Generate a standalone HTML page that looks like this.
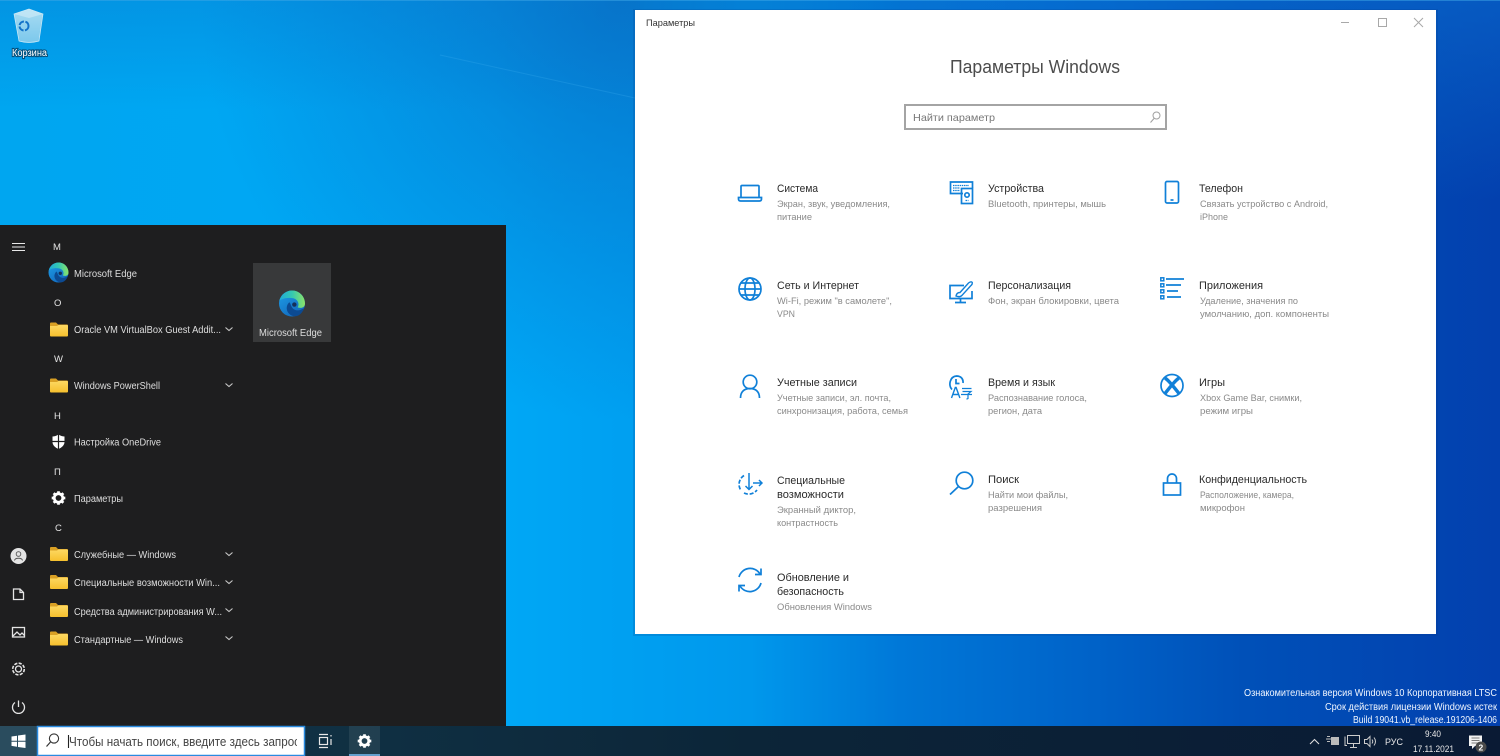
<!DOCTYPE html>
<html lang="ru"><head><meta charset="utf-8"><title>Параметры Windows</title>
<style>
html,body{margin:0;padding:0;width:1500px;height:756px;overflow:hidden;background:#0a6fd0}
svg{display:block}
text{font-family:"Liberation Sans","Noto Sans CJK SC",sans-serif;white-space:pre}
.l{fill:#dedede;font-size:10px}
.h{fill:#e4e4e4;font-size:9.5px}
.t{fill:#2a2a2a;font-size:11px}
.s{fill:#8a8a8a;font-size:9.5px}
.i{fill:none;stroke:#1080d8;stroke-width:1.7}
.w{fill:#f0f6ff;font-size:10px}
.d{fill:none;stroke:#e4e4e4;stroke-width:1.3}
.ch{fill:none;stroke:#c8c8c8;stroke-width:1.1}
</style></head><body>
<svg width="1500" height="756" viewBox="0 0 1500 756" xmlns="http://www.w3.org/2000/svg">
<defs>
<linearGradient id="bg" x1="0" y1="0" x2="1" y2="0">
<stop offset="0" stop-color="#00a6f0"/><stop offset=".33" stop-color="#00a8f6"/><stop offset=".5" stop-color="#0098ec"/><stop offset=".6" stop-color="#0078d8"/><stop offset=".73" stop-color="#0062c8"/><stop offset=".83" stop-color="#0050b8"/><stop offset="1" stop-color="#0340ae"/>
</linearGradient>
<radialGradient id="dk" gradientUnits="userSpaceOnUse" cx="620" cy="0" r="420">
<stop offset="0" stop-color="#0a5cb4" stop-opacity=".6"/><stop offset=".6" stop-color="#0a62bc" stop-opacity=".25"/><stop offset="1" stop-color="#0a62bc" stop-opacity="0"/>
</radialGradient>
<linearGradient id="top" x1="0" y1="0" x2="0" y2="1">
<stop offset="0" stop-color="#0a6cc4" stop-opacity=".3"/><stop offset="1" stop-color="#0a6cc4" stop-opacity="0"/>
</linearGradient>
<linearGradient id="tr" x1="0" y1="0" x2="0" y2="1">
<stop offset="0" stop-color="#0a72d4" stop-opacity=".5"/><stop offset=".4" stop-color="#0a72d4" stop-opacity="0"/>
</linearGradient>
<linearGradient id="tb" x1="0" y1="0" x2="1" y2="0">
<stop offset="0" stop-color="#1f4356"/><stop offset=".03" stop-color="#163546"/><stop offset=".26" stop-color="#0f2f42"/><stop offset=".5" stop-color="#0c2538"/><stop offset="1" stop-color="#0a1a34"/>
</linearGradient>
<linearGradient id="fold" x1="0" y1="0" x2="0" y2="1"><stop offset="0" stop-color="#fdd862"/><stop offset="1" stop-color="#f6c02e"/></linearGradient>
<linearGradient id="e1" x1="0" y1="0" x2=".7" y2="1"><stop offset="0" stop-color="#1e9fe8"/><stop offset="1" stop-color="#1268bc"/></linearGradient>
<linearGradient id="e2" x1="0" y1=".5" x2="1" y2=".5"><stop offset="0" stop-color="#1faad8"/><stop offset=".5" stop-color="#35c8b0"/><stop offset="1" stop-color="#8ce468"/></linearGradient>
<linearGradient id="bin" x1="0" y1="0" x2="0" y2="1"><stop offset="0" stop-color="#a8dcf2"/><stop offset="1" stop-color="#7cc8ec"/></linearGradient>
<g id="folder"><path d="M0 2 a1 1 0 0 1 1-1 h5 l2 2 h9 a1 1 0 0 1 1 1 v3 H0z" fill="#d9a024"/><path d="M0 4.500 h7 l1.500-1 H17 a1 1 0 0 1 1 1 V14 a1 1 0 0 1-1 1 H1 a1 1 0 0 1-1-1z" fill="url(#fold)"/></g>
<path id="chev" class="ch" d="M-3.500 -1.500 L0 1.500 L3.500 -1.500"/>
<g id="edge"><circle r="10" fill="url(#e1)"/>
<path d="M-2 -1 C-5.500 2 -4.500 8 1 9.700 C5 10.500 8 7.500 9.300 3.500 C6 6 2 6 0 3 C-1 1.500 -1 0 -2 -1z" fill="#0c4a92"/>
<path d="M-9.800 -2 C-8 -8 -3 -10 0 -10 C6 -10 10 -5 10 0 C10 3.500 6.500 3.800 4.300 3 C5.800 1 5 -3 1 -4 C-4 -5 -8 -3.500 -9.800 -2z" fill="url(#e2)"/>
<circle cx="1.800" cy="0.800" r="1.700" fill="#15305a"/></g>
<g id="gear"><circle r="5" fill="none" stroke="#fff" stroke-width="3.200"/><g stroke="#fff" stroke-width="3.200"><path d="M0 -8V-5.500M0 8V5.500M-8 0H-5.500M8 0H5.500M-5.700 -5.700L-4 -4M5.700 5.700L4 4M-5.700 5.700L-4 4M5.700 -5.700L4 -4"/></g></g>
</defs>

<!-- wallpaper -->
<rect width="1500" height="756" fill="url(#bg)"/>
<rect width="1500" height="756" fill="url(#dk)"/>
<rect width="640" height="110" fill="url(#top)"/>
<rect x="900" width="600" height="500" fill="url(#tr)"/>
<path d="M440 55 L635 98" stroke="#4ab8f5" stroke-width="1" opacity=".22"/>
<rect x="0" y="0" width="1500" height="1" fill="#3fa8e6" opacity=".5"/>

<!-- recycle bin -->
<path d="M14 14 L29 9 L43 14 L39 41 Q29 44 19 41z" fill="url(#bin)" stroke="#cfeaf6" stroke-width=".7"/>
<path d="M14 14 L29 18 L43 14 L29 9z" fill="#c8e8f5" opacity=".75"/>
<circle cx="24" cy="26" r="4.500" fill="none" stroke="#1272c9" stroke-width="2" stroke-dasharray="6 1.500"/>
<text x="12" y="56" font-size="10" fill="#000" textLength="35" lengthAdjust="spacingAndGlyphs" stroke="#06304f" stroke-width="2.200" opacity=".7">Корзина</text>
<text x="12" y="56" font-size="10" fill="#fff" textLength="35" lengthAdjust="spacingAndGlyphs">Корзина</text>

<!-- settings window -->
<rect x="633" y="9" width="805" height="627" fill="#063a86" opacity=".18"/>
<rect x="635" y="10" width="801" height="624" fill="#fff"/>
<text x="646" y="26" font-size="9.500" fill="#333" textLength="49" lengthAdjust="spacingAndGlyphs">Параметры</text>
<path d="M1341 22.500h8" stroke="#a8a8a8"/>
<rect x="1378.500" y="18.500" width="8" height="8" fill="none" stroke="#a8a8a8"/>
<path d="M1414 18l9 9M1423 18l-9 9" stroke="#a8a8a8"/>
<text x="950" y="73" font-size="18" fill="#4c4c4c" textLength="170" lengthAdjust="spacingAndGlyphs">Параметры Windows</text>
<rect x="905" y="105" width="261" height="24" fill="#fff" stroke="#a4a4a4" stroke-width="2"/>
<text x="913" y="121" font-size="10.500" fill="#777" textLength="82" lengthAdjust="spacingAndGlyphs">Найти параметр</text>
<circle cx="1156.500" cy="115.500" r="3.500" fill="none" stroke="#a0a0a0"/><path d="M1154 118.500l-3.500 4" stroke="#a0a0a0"/>

<!-- col 1 -->
<text class="t" x="777" y="192" textLength="41" lengthAdjust="spacingAndGlyphs">Система</text>
<text class="s" x="777" y="207" textLength="113" lengthAdjust="spacingAndGlyphs">Экран, звук, уведомления,</text>
<text class="s" x="777" y="220" textLength="35" lengthAdjust="spacingAndGlyphs">питание</text>
<text class="t" x="777" y="289" textLength="82" lengthAdjust="spacingAndGlyphs">Сеть и Интернет</text>
<text class="s" x="777" y="304" textLength="115" lengthAdjust="spacingAndGlyphs">Wi-Fi, режим "в самолете",</text>
<text class="s" x="777" y="317" textLength="18" lengthAdjust="spacingAndGlyphs">VPN</text>
<text class="t" x="777" y="386" textLength="80" lengthAdjust="spacingAndGlyphs">Учетные записи</text>
<text class="s" x="777" y="401" textLength="114" lengthAdjust="spacingAndGlyphs">Учетные записи, эл. почта,</text>
<text class="s" x="777" y="414" textLength="131" lengthAdjust="spacingAndGlyphs">синхронизация, работа, семья</text>
<text class="t" x="777" y="484" textLength="68" lengthAdjust="spacingAndGlyphs">Специальные</text>
<text class="t" x="777" y="498" textLength="67" lengthAdjust="spacingAndGlyphs">возможности</text>
<text class="s" x="777" y="513" textLength="79" lengthAdjust="spacingAndGlyphs">Экранный диктор,</text>
<text class="s" x="777" y="526" textLength="61" lengthAdjust="spacingAndGlyphs">контрастность</text>
<text class="t" x="777" y="581" textLength="72" lengthAdjust="spacingAndGlyphs">Обновление и</text>
<text class="t" x="777" y="595" textLength="67" lengthAdjust="spacingAndGlyphs">безопасность</text>
<text class="s" x="777" y="610" textLength="95" lengthAdjust="spacingAndGlyphs">Обновления Windows</text>
<!-- col 2 -->
<text class="t" x="988" y="192" textLength="56" lengthAdjust="spacingAndGlyphs">Устройства</text>
<text class="s" x="988" y="207" textLength="118" lengthAdjust="spacingAndGlyphs">Bluetooth, принтеры, мышь</text>
<text class="t" x="988" y="289" textLength="83" lengthAdjust="spacingAndGlyphs">Персонализация</text>
<text class="s" x="988" y="304" textLength="131" lengthAdjust="spacingAndGlyphs">Фон, экран блокировки, цвета</text>
<text class="t" x="988" y="386" textLength="67" lengthAdjust="spacingAndGlyphs">Время и язык</text>
<text class="s" x="988" y="401" textLength="99" lengthAdjust="spacingAndGlyphs">Распознавание голоса,</text>
<text class="s" x="988" y="414" textLength="54" lengthAdjust="spacingAndGlyphs">регион, дата</text>
<text class="t" x="988" y="483" textLength="31" lengthAdjust="spacingAndGlyphs">Поиск</text>
<text class="s" x="988" y="498" textLength="80" lengthAdjust="spacingAndGlyphs">Найти мои файлы,</text>
<text class="s" x="988" y="511" textLength="54" lengthAdjust="spacingAndGlyphs">разрешения</text>
<!-- col 3 -->
<text class="t" x="1199" y="192" textLength="44" lengthAdjust="spacingAndGlyphs">Телефон</text>
<text class="s" x="1200" y="207" textLength="128" lengthAdjust="spacingAndGlyphs">Связать устройство с Android,</text>
<text class="s" x="1200" y="220" textLength="28" lengthAdjust="spacingAndGlyphs">iPhone</text>
<text class="t" x="1199" y="289" textLength="64" lengthAdjust="spacingAndGlyphs">Приложения</text>
<text class="s" x="1200" y="304" textLength="98" lengthAdjust="spacingAndGlyphs">Удаление, значения по</text>
<text class="s" x="1200" y="317" textLength="129" lengthAdjust="spacingAndGlyphs">умолчанию, доп. компоненты</text>
<text class="t" x="1199" y="386" textLength="26" lengthAdjust="spacingAndGlyphs">Игры</text>
<text class="s" x="1200" y="401" textLength="102" lengthAdjust="spacingAndGlyphs">Xbox Game Bar, снимки,</text>
<text class="s" x="1200" y="414" textLength="53" lengthAdjust="spacingAndGlyphs">режим игры</text>
<text class="t" x="1199" y="483" textLength="108" lengthAdjust="spacingAndGlyphs">Конфиденциальность</text>
<text class="s" x="1200" y="498" textLength="94" lengthAdjust="spacingAndGlyphs">Расположение, камера,</text>
<text class="s" x="1200" y="511" textLength="45" lengthAdjust="spacingAndGlyphs">микрофон</text>

<!-- settings icons -->
<g class="i">
<path d="M741 197V186.500Q741 185.500 742 185.500H758Q759 185.500 759 186.500V197"/><path d="M738.500 197.500H761.500V199Q761.500 201 759.500 201H740.500Q738.500 201 738.500 199z"/>
<path d="M963 193.500H950.500V182H972.500V188"/><rect x="961.500" y="188.500" width="11" height="15"/><circle cx="967" cy="195" r="2.200"/><path d="M965.500 200.500h3M953 185.500h16M953 188h7M953 190.500h7" stroke-width="1.200" stroke-dasharray="1.500 .7"/>
<rect x="1165.500" y="181.500" width="13" height="21.500" rx="1.500"/><path d="M1170.500 200h3"/>
<circle cx="750" cy="289" r="11"/><ellipse cx="750" cy="289" rx="5" ry="11"/><path d="M739 289h22M741 283h18M741 295h18"/>
<path d="M964 285.500H950V298.500H972V291M955 302.500h11M960.500 299v3.500"/><path d="M956 296C956.500 293.500 958 292.500 960 292.500L968.500 283Q971 281 972.200 282.300Q972.800 284 970.500 286L962.500 294.800C961 296.800 958.500 297 956 296z" stroke-width="1.400"/>
<path d="M1166 279h18M1166 285h15M1167 291h11M1167 297h14"/><rect x="1160.800" y="277.800" width="3" height="3" stroke-width="1.500"/><rect x="1160.800" y="283.800" width="3" height="3" stroke-width="1.500"/><rect x="1160.800" y="289.800" width="3" height="3" stroke-width="1.500"/><rect x="1160.800" y="295.800" width="3" height="3" stroke-width="1.500"/>
<circle cx="750" cy="382" r="6.800"/><path d="M740.500 398C740.500 392 744 388.500 750 388.500S759.500 392 759.500 398"/>
<path d="M952 389.500C948 385 950 376.500 956.500 376C961 376 963.500 379 963 383"/><path d="M956 379v4.500h3.500"/>
<path d="M951.500 398l3.800-10.500h.8l3.800 10.500M953 394.500h5.500" stroke-width="1.400"/><path d="M962 388.500h9.500M962.500 391.500h8.500l-3 2.500v4.500l-1.500.7M961 394.500h11" stroke-width="1.200"/>
<circle cx="1172" cy="385.500" r="11"/>
<path d="M1165 378C1169 380.500 1175 388.500 1179 393.500M1179 378C1175 380.500 1169 388.500 1165 393.500" stroke-width="3.400"/>
<path d="M749 473v16M745.500 486l3.500 3.500 3.500-3.500M753 483h9M759 480l3 3-3 3" stroke-width="1.500"/>
<path d="M744 475.500A10.500 10.500 0 0 0 741 490.500M744 493A10.500 10.500 0 0 0 757 490" stroke-dasharray="4 1.800"/>
<circle cx="964.500" cy="480.500" r="8.300"/><path d="M958.500 486.500L950 494.500"/>
<rect x="1163.500" y="483" width="17" height="12"/><path d="M1167.500 483V478.500A4.500 4.500 0 0 1 1176.500 478.500V483"/>
<path d="M739 577A11.500 11.500 0 0 1 760 574M761 568.500V574.500H755"/><path d="M761 583A11.500 11.500 0 0 1 740 586M739 591.500V585.500H745"/>
</g>

<!-- start menu -->
<rect x="0" y="225" width="506" height="501" fill="#1e1e1f"/>
<path d="M12 243.500h13M12 247h13M12 250.500h13" stroke="#e8e8e8" stroke-width="1"/>
<text class="h" x="53" y="250">М</text>
<text class="h" x="54" y="306">О</text>
<text class="h" x="54" y="362">W</text>
<text class="h" x="54" y="419">Н</text>
<text class="h" x="54" y="475">П</text>
<text class="h" x="55" y="531">С</text>
<text class="l" x="74" y="277" textLength="63" lengthAdjust="spacingAndGlyphs">Microsoft Edge</text>
<text class="l" x="74" y="333" textLength="147" lengthAdjust="spacingAndGlyphs">Oracle VM VirtualBox Guest Addit...</text>
<text class="l" x="74" y="389" textLength="86" lengthAdjust="spacingAndGlyphs">Windows PowerShell</text>
<text class="l" x="74" y="445.500" textLength="87" lengthAdjust="spacingAndGlyphs">Настройка OneDrive</text>
<text class="l" x="74" y="502" textLength="49" lengthAdjust="spacingAndGlyphs">Параметры</text>
<text class="l" x="74" y="558" textLength="102" lengthAdjust="spacingAndGlyphs">Служебные — Windows</text>
<text class="l" x="74" y="586" textLength="146" lengthAdjust="spacingAndGlyphs">Специальные возможности Win...</text>
<text class="l" x="74" y="615" textLength="148" lengthAdjust="spacingAndGlyphs">Средства администрирования W...</text>
<text class="l" x="74" y="643" textLength="109" lengthAdjust="spacingAndGlyphs">Стандартные — Windows</text>
<use href="#edge" x="58.500" y="272.500"/>
<use href="#folder" x="50" y="321.500"/>
<use href="#folder" x="50" y="377.500"/>
<use href="#folder" x="50" y="546"/>
<use href="#folder" x="50" y="574"/>
<use href="#folder" x="50" y="602"/>
<use href="#folder" x="50" y="630.500"/>
<use href="#chev" x="229" y="329"/>
<use href="#chev" x="229" y="385"/>
<use href="#chev" x="229" y="554"/>
<use href="#chev" x="229" y="582"/>
<use href="#chev" x="229" y="610"/>
<use href="#chev" x="229" y="638"/>
<path d="M58.500 434.500C56 436 54 436.500 52.500 436.500V442C52.500 445 55 447.500 58.500 449C62 447.500 64.500 445 64.500 442V436.500C63 436.500 61 436 58.500 434.500z" fill="#fff"/>
<path d="M58.500 434v15M52 441.500h13" stroke="#1e1e1f" stroke-width="1.200"/>
<g transform="translate(58.500 498) scale(.85)"><use href="#gear"/></g>
<!-- tile -->
<rect x="253" y="263" width="78" height="79" fill="#38393a"/>
<g transform="translate(292 303.500) scale(1.300)"><use href="#edge"/></g>
<text class="l" x="259" y="336" textLength="63" lengthAdjust="spacingAndGlyphs">Microsoft Edge</text>
<!-- sidebar icons -->
<circle cx="18.500" cy="556" r="8" fill="#e4e4e4"/>
<circle cx="18.500" cy="554" r="2.300" fill="none" stroke="#555" stroke-width=".9"/><path d="M14.500 560.500C15 557.500 22 557.500 22.500 560.500" fill="none" stroke="#555" stroke-width=".9"/>
<path class="d" d="M13.500 589H20L23.500 592.500V599.500H13.500zM20 589V592.500H23.500"/>
<rect class="d" x="12.500" y="627.500" width="12" height="9.500"/><path class="d" d="M13 636L17 632L20 635L22 633L24.500 635.500"/>
<g class="d" transform="translate(18.500 669)"><circle r="3"/><circle r="5.800" stroke-dasharray="3.200 1.350" stroke-width="1.600"/></g>
<path class="d" d="M15 702.500A6 6 0 1 0 22 702.500M18.500 700.500V707"/>

<!-- watermark -->
<text class="w" x="1244" y="696" textLength="253" lengthAdjust="spacingAndGlyphs">Ознакомительная версия Windows 10 Корпоративная LTSC</text>
<text class="w" x="1325" y="710" textLength="172" lengthAdjust="spacingAndGlyphs">Срок действия лицензии Windows истек</text>
<text class="w" x="1353" y="723" textLength="144" lengthAdjust="spacingAndGlyphs">Build 19041.vb_release.191206-1406</text>

<!-- taskbar -->
<rect x="0" y="726" width="1500" height="30" fill="url(#tb)"/>
<rect x="0" y="726" width="37" height="30" fill="#2a4c5e"/>
<g fill="#fff"><path d="M11.500 736.500l5.500-.8v5h-5.500zM18 735.500l7.500-1v6.200H18zM11.500 741.700H17v5l-5.500-.8zM18 741.700h7.500v6.300l-7.500-1z"/></g>
<rect x="37.500" y="726.500" width="267" height="29" fill="#fff" stroke="#2a8be0" stroke-width="1.500"/>
<circle cx="54" cy="738.500" r="4.600" fill="none" stroke="#333" stroke-width="1.100"/><path d="M50.500 742L46.500 746.500" stroke="#333" stroke-width="1.200"/>
<path d="M68.500 735V748" stroke="#222" stroke-width="1.100"/>
<svg x="69" y="730" width="228" height="24"><text x="0" y="16" font-size="13" fill="#444" textLength="231" lengthAdjust="spacingAndGlyphs">Чтобы начать поиск, введите здесь запрос</text></svg>
<g fill="none" stroke="#e8e8e8" stroke-width="1.200"><rect x="319.500" y="737.500" width="8" height="7"/><path d="M319 734.500h9M319 747.500h9M331 735v1.500M331 739v6"/></g>
<rect x="349" y="726" width="31" height="30" fill="#fff" opacity=".08"/>
<rect x="349" y="754" width="31" height="2" fill="#76b9ed" opacity=".8"/>
<g transform="translate(364.500 741) scale(.85)"><use href="#gear"/></g>
<!-- tray -->
<path d="M1310 744l4.500-4.500 4.500 4.500" fill="none" stroke="#ddd" stroke-width="1.100"/>
<path d="M1327 736.500h3M1326 739h5M1327 741.500h3" stroke="#bbb" stroke-width="1"/><rect x="1331" y="737" width="8" height="8" fill="#bbb"/>
<g fill="none" stroke="#ccc" stroke-width="1"><rect x="1347.500" y="735.500" width="12" height="8"/><path d="M1345 736.500v9h2M1350 747.500h7M1353.500 744v3.500"/></g>
<g fill="none" stroke="#ccc" stroke-width="1"><path d="M1364.500 739.500h2.500l3-3v10l-3-3h-2.500z"/><path d="M1372 739.500q1.500 2 0 4M1374 737.500q3 4 0 8"/></g>
<text x="1385" y="745" font-size="9.500" fill="#e8e8e8" textLength="18" lengthAdjust="spacingAndGlyphs">РУС</text>
<text x="1425" y="737" font-size="9.500" fill="#e8e8e8" textLength="16" lengthAdjust="spacingAndGlyphs">9:40</text>
<text x="1413" y="752" font-size="9.500" fill="#e8e8e8" textLength="41" lengthAdjust="spacingAndGlyphs">17.11.2021</text>
<path d="M1469 735.500H1482V746H1475L1472 749V746H1469z" fill="#f2f2f2"/>
<path d="M1471.500 738h8M1471.500 740.500h8M1471.500 743h6" stroke="#555" stroke-width=".8"/>
<circle cx="1481" cy="747" r="5.500" fill="#4a4a4a"/>
<text x="1478.500" y="750.500" font-size="8.500" font-weight="bold" fill="#fff">2</text>
</svg>
</body></html>
